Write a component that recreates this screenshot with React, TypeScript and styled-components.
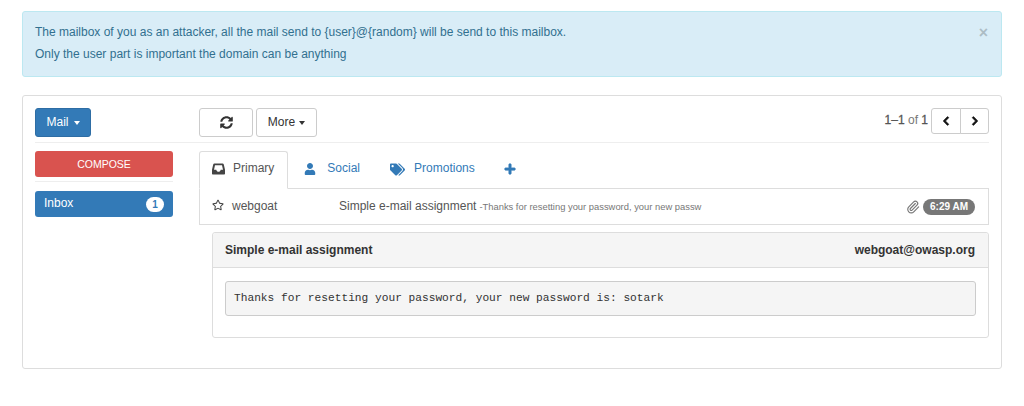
import React from "react";
import styled, { createGlobalStyle } from "styled-components";
import { FaChevronLeft, FaChevronRight, FaPlus, FaRegStar, FaSyncAlt, FaTags, FaUser } from "react-icons/fa";
import { Paperclip } from "lucide-react";

const GlobalStyle = createGlobalStyle`
  * { box-sizing: border-box; }
  html, body { margin: 0; background: #fff; }
  body {
    font-family: "Liberation Sans", Arial, sans-serif;
    font-size: 12px;
    line-height: 1.43;
    color: #333;
  }
`;

function InboxIcon() {
  return (
    <svg width="13" height="12" viewBox="0 0 13 12">
      <path
        fill="#444"
        fillRule="evenodd"
        d="M2.400 0.500h8.200c.600 0 1 .300 1.200.900L13 6.800V10.500c0 .600-.400 1-1 1H1c-.600 0-1-.400-1-1V6.800L1.200 1.400c.200-.600.600-.900 1.200-.900zM3 2.200L2 6.800H4.300C4.700 8.200 5.400 8.800 6.500 8.800S8.300 8.200 8.700 6.800H11L10 2.200z"
      />
    </svg>
  );
}

export default function App() {
  return (
    <Page>
      <GlobalStyle />
      <Alert>
        <div>
          <AlertLine>The mailbox of you as an attacker, all the mail send to {"{user}@{random}"} will be send to this mailbox.</AlertLine>
          <AlertLine>Only the user part is important the domain can be anything</AlertLine>
        </div>
        <Close>×</Close>
      </Alert>

      <Panel>
        <TopRow>
          <Sidebar>
            <PrimaryButton>
              Mail <Caret />
            </PrimaryButton>
          </Sidebar>
          <Toolbar>
            <RefreshButton>
              <FaSyncAlt size={13} />
            </RefreshButton>
            <MoreButton>
              More <Caret />
            </MoreButton>
            <Pager>
              <PagerText>
                <strong>1–1</strong> of <strong>1</strong>
              </PagerText>
              <PagerGroup>
                <PagerButton>
                  <FaChevronLeft size={10} />
                </PagerButton>
                <PagerButton>
                  <FaChevronRight size={10} />
                </PagerButton>
              </PagerGroup>
            </Pager>
          </Toolbar>
        </TopRow>

        <Divider />

        <MainRow>
          <Sidebar>
            <Compose>COMPOSE</Compose>
            <SideRule />
            <InboxItem>
              Inbox <Count>1</Count>
            </InboxItem>
          </Sidebar>

          <Content>
            <Tabs>
              <ActiveTab $gap={8}>
                <InboxIcon />
                Primary
              </ActiveTab>
              <Tab $gap={11}>
                <FaUser size={12} color="#337ab7" />
                Social
              </Tab>
              <Tab $gap={9}>
                <FaTags size={15} color="#337ab7" />
                Promotions
              </Tab>
              <Tab $gap={0}>
                <PlusIcon size={12} color="#337ab7" />
              </Tab>
            </Tabs>

            <MailRow>
              <StarIcon size={12} color="#444" />
              <Sender>webgoat</Sender>
              <Subject>Simple e-mail assignment</Subject>
              <Snippet>-Thanks for resetting your password, your new passw</Snippet>
              <RowEnd>
                <Paperclip size={14} color="#777" strokeWidth={2} />
                <TimeBadge>6:29 AM</TimeBadge>
              </RowEnd>
            </MailRow>

            <MailPanel>
              <MailHeading>
                <span>Simple e-mail assignment</span>
                <span>webgoat@owasp.org</span>
              </MailHeading>
              <MailBody>
                <Pre>Thanks for resetting your password, your new password is: sotark</Pre>
              </MailBody>
            </MailPanel>
          </Content>
        </MainRow>
      </Panel>
    </Page>
  );
}

const Page = styled.div`
  padding: 11px 22px 0;
`;

const Alert = styled.div`
  display: flex;
  justify-content: space-between;
  height: 66px;
  padding: 9px 13px 9px 12px;
  margin-bottom: 18px;
  background: #d9edf7;
  border: 1px solid #bce8f1;
  border-radius: 3px;
  color: #31708f;
`;

const AlertLine = styled.div`
  line-height: 22px;
`;

const Close = styled.span`
  font-size: 16px;
  font-weight: bold;
  color: #000;
  opacity: 0.2;
  line-height: 24px;
`;

const Panel = styled.div`
  height: 274px;
  padding: 12px 12px 0;
  border: 1px solid #ddd;
  border-radius: 3px;
`;

const TopRow = styled.div`
  display: flex;
  gap: 26px;
`;

const MainRow = styled.div`
  display: flex;
  gap: 26px;
`;

const Sidebar = styled.div`
  flex: 0 0 138px;
`;

const Toolbar = styled.div`
  flex: 1;
  display: flex;
  align-items: flex-start;
  gap: 3px;
`;

const Content = styled.div`
  flex: 1;
  min-width: 0;
`;

const Divider = styled.div`
  height: 1px;
  margin-top: 5px;
  background: #eee;
`;

const Caret = styled.span`
  display: inline-block;
  width: 0;
  height: 0;
  margin-left: 1px;
  vertical-align: middle;
  border-top: 4px solid currentColor;
  border-left: 3.5px solid transparent;
  border-right: 3.5px solid transparent;
`;

const BaseButton = styled.button`
  height: 29px;
  padding: 0 11px;
  font: inherit;
  color: #333;
  background: #fff;
  border: 1px solid #ccc;
  border-radius: 3px;
  display: inline-flex;
  align-items: center;
  justify-content: center;
  gap: 3px;
`;

const PrimaryButton = styled(BaseButton)`
  width: 56px;
  gap: 4px;
  color: #fff;
  background: #337ab7;
  border-color: #2e6da4;
`;

const RefreshButton = styled(BaseButton)`
  width: 54px;
`;

const MoreButton = styled(BaseButton)`
  width: 61px;
`;

const Pager = styled.div`
  margin-left: auto;
  display: flex;
  align-items: center;
  gap: 3px;
`;

const PagerText = styled.span`
  color: #777;
  strong {
    font-weight: normal;
    color: #555;
    -webkit-text-stroke: 0.3px #555;
  }
`;

const PagerGroup = styled.div`
  display: flex;
`;

const PagerButton = styled(BaseButton)`
  width: 29px;
  height: 26px;
  padding: 0;
  color: #111;
  svg {
    stroke: currentColor;
    stroke-width: 40;
  }
  &:first-child {
    width: 30px;
    border-radius: 3px 0 0 3px;
  }
  &:last-child {
    border-radius: 0 3px 3px 0;
    margin-left: -1px;
  }
`;

const Compose = styled.div`
  height: 26px;
  margin-top: 8px;
  display: flex;
  align-items: center;
  justify-content: center;
  font-size: 10.5px;
  color: #fff;
  background: #d9534f;
  border-radius: 3px;
`;

const SideRule = styled.div`
  height: 1px;
  margin: 4px 0 9px;
  background: #eee;
`;

const InboxItem = styled.div`
  height: 26px;
  padding: 0 9px;
  display: flex;
  align-items: center;
  justify-content: space-between;
  color: #fff;
  background: #337ab7;
  border-radius: 3px;
`;

const Count = styled.span`
  min-width: 18px;
  height: 15px;
  font-size: 10px;
  font-weight: bold;
  line-height: 15px;
  text-align: center;
  color: #337ab7;
  background: #fff;
  border-radius: 8px;
`;

const Tabs = styled.div`
  display: flex;
  height: 38px;
  margin-top: 8px;
  border-bottom: 1px solid #ddd;
`;

const Tab = styled.div<{ $gap: number }>`
  height: 37px;
  padding: 0 13px 1px 15px;
  display: flex;
  align-items: center;
  gap: ${(p) => p.$gap}px;
  color: #337ab7;
  border: 1px solid transparent;
`;

const ActiveTab = styled(Tab)`
  height: 38px;
  padding: 0 13px 2px 12px;
  color: #555;
  background: #fff;
  border-color: #ddd #ddd #fff;
  border-radius: 3px 3px 0 0;
`;

const PlusIcon = styled(FaPlus)`
  stroke: #337ab7;
  stroke-width: 30;
  margin-left: -1px;
`;

const MailRow = styled.div`
  height: 36px;
  padding: 0 13px 0 12px;
  display: flex;
  align-items: center;
  border: 1px solid #ddd;
  border-top: 0;
  color: #555;
`;

const StarIcon = styled(FaRegStar)`
  margin-bottom: 3px;
`;

const Sender = styled.span`
  width: 107px;
  margin-left: 8px;
`;

const Subject = styled.span``;

const Snippet = styled.span`
  margin-left: 3px;
  font-size: 9.4px;
  color: #777;
`;

const RowEnd = styled.span`
  margin-left: auto;
  display: flex;
  align-items: center;
  gap: 3px;
`;

const TimeBadge = styled.span`
  height: 16px;
  padding: 0 7px;
  font-size: 10px;
  font-weight: bold;
  line-height: 15px;
  color: #fff;
  background: #777;
  border-radius: 8px;
`;

const MailPanel = styled.div`
  height: 106px;
  margin: 7px 0 0 13px;
  border: 1px solid #ddd;
  border-radius: 3px;
`;

const MailHeading = styled.div`
  height: 35px;
  padding: 1px 13px 0 12px;
  display: flex;
  align-items: center;
  justify-content: space-between;
  font-weight: bold;
  background: #f5f5f5;
  border-bottom: 1px solid #ddd;
  border-radius: 3px 3px 0 0;
`;

const MailBody = styled.div`
  padding: 13px 12px;
`;

const Pre = styled.pre`
  height: 35px;
  margin: 0;
  padding: 0 8px;
  font-family: "Liberation Mono", monospace;
  font-size: 11.2px;
  line-height: 33px;
  color: #333;
  background: #f5f5f5;
  border: 1px solid #ccc;
  border-radius: 3px;
`;
